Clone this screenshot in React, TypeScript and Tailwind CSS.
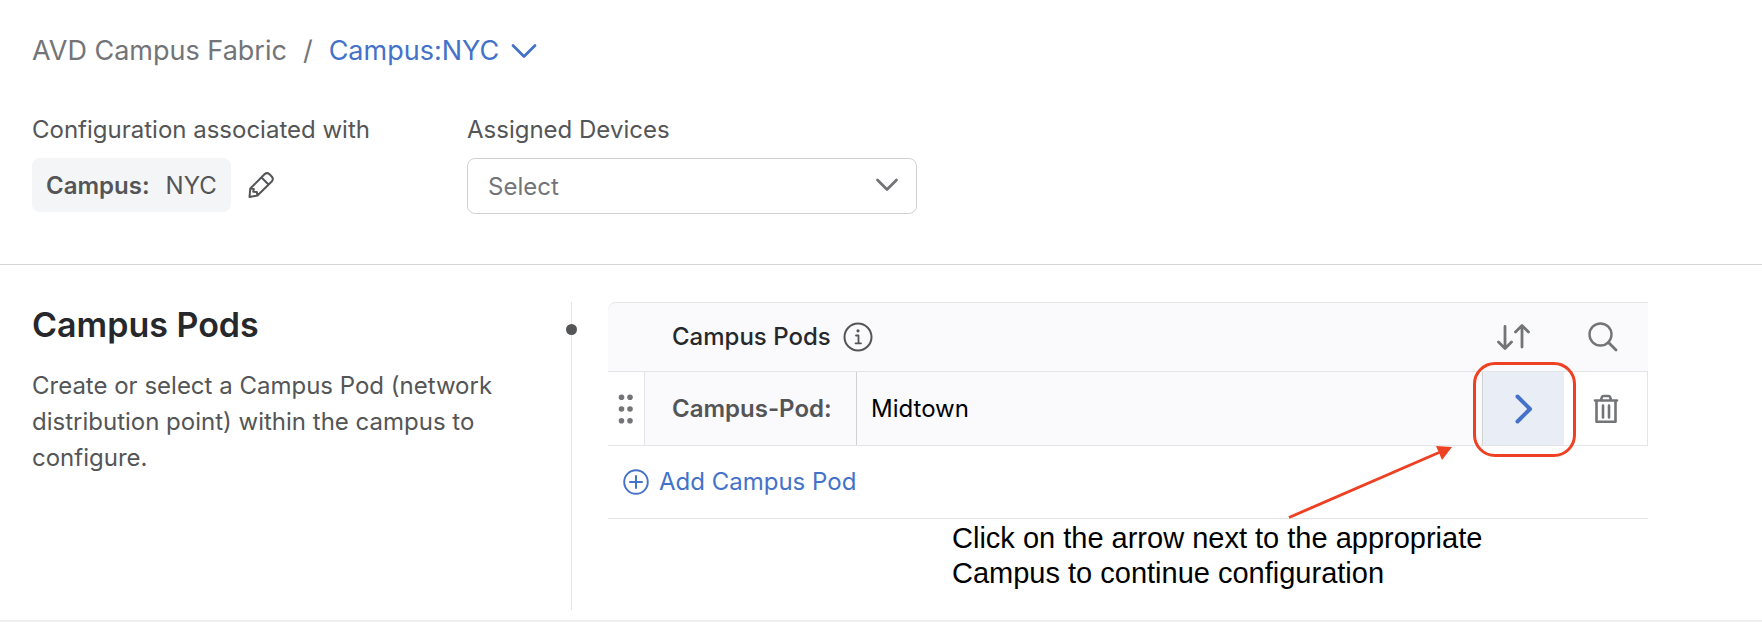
import type { ReactNode } from "react";

function Glyph({ className, box, children }: { className: string; box: string; children: ReactNode }) {
  return (
    <svg className={className} viewBox={box} fill="none" stroke="currentColor" strokeLinecap="round" strokeLinejoin="round" aria-hidden="true">
      {children}
    </svg>
  );
}

function Header() {
  return (
    <header className="border-b border-[#d5d5d7] px-8 pt-8 pb-[50px]">
      <nav aria-label="Breadcrumb" className="flex h-[38px] items-center text-[27px] leading-[38px]">
        <a href="#fabric" className="text-[#737478]">AVD Campus Fabric</a>
        <span className="mx-4 text-[#737478]">/</span>
        <button type="button" className="flex items-center gap-3 text-[#4472c9]">
          Campus:NYC
          <Glyph className="h-4 w-[26px]" box="0 0 26 16">
            <path d="M2 2.5 13 13.5 24 2.5" strokeWidth="2.8" />
          </Glyph>
        </button>
      </nav>
      <div className="mt-[45px] flex">
        <div className="w-[435px]">
          <p className="text-[24px] leading-[30px]">Configuration associated with</p>
          <div className="mt-[13px] flex items-center gap-4">
            <div className="flex h-[54px] items-center gap-4 rounded-lg bg-[#f4f5f7] px-3.5 pt-0.5 text-[24px]">
              <span className="font-semibold">Campus:</span>
              <span>NYC</span>
            </div>
            <button type="button" aria-label="Edit association">
              <Glyph className="h-7 w-7" box="0 0 28 28">
                <path d="M2.500 26 3.300 17.500 17.500 3.300Q20 1 22.500 3.300L24.700 5.500Q27 8 24.700 10.500L10.500 24.500ZM14.500 6.500 21.500 13.500M3.300 17.500 6.800 18 6.300 20.800 9.800 21 10.500 24.500" strokeWidth="2" />
              </Glyph>
            </button>
          </div>
        </div>
        <div className="w-[450px]">
          <label htmlFor="devices" className="block text-[24px] leading-[30px]">Assigned Devices</label>
          <div className="relative mt-[13px]">
            <select id="devices" className="h-14 w-full appearance-none rounded-lg border border-[#d0d1d3] bg-white px-5 pt-0.5 text-[24px] text-[#737478]">
              <option>Select</option>
            </select>
            <Glyph className="pointer-events-none absolute top-5 right-[18px] h-[14px] w-[24px] text-[#737478]" box="0 0 24 14">
              <path d="M2.500 2 12 11.500 21.500 2" strokeWidth="2.8" />
            </Glyph>
          </div>
        </div>
      </div>
    </header>
  );
}

function PodTable() {
  return (
    <div className="relative w-[1040px] shrink-0">
      <div className="flex h-[70px] items-center rounded-tl-lg border-y border-[#e4e5e7] bg-[#fafafc] pl-16">
        <span className="text-[24px] font-medium text-[#27282b]">Campus Pods</span>
        <button type="button" aria-label="About campus pods" className="ml-3 text-[#545557]">
          <Glyph className="h-[30px] w-[30px]" box="0 0 30 30">
            <circle cx="15" cy="15" r="13.500" strokeWidth="2" />
            <path d="M13 13.500h2.500V21M12.500 21.300h5.500" strokeWidth="1.800" />
            <circle cx="15" cy="8.800" r="1.600" fill="currentColor" stroke="none" />
          </Glyph>
        </button>
        <button type="button" aria-label="Sort" className="ml-auto text-[#737478]">
          <Glyph className="h-7 w-[34px]" box="0 0 34 28">
            <path d="M9 3.500v22M2.500 19 9 25.500l6.500-6.500M26 24V3M19.500 9 26 2.500 32.500 9" strokeWidth="2.800" />
          </Glyph>
        </button>
        <button type="button" aria-label="Search" className="mr-[30px] ml-[58px] text-[#737478]">
          <Glyph className="h-[30px] w-[30px]" box="0 0 30 30">
            <circle cx="12.500" cy="12.500" r="11" strokeWidth="2.400" />
            <path d="m20.500 20.500 7.500 7.500" strokeWidth="2.800" />
          </Glyph>
        </button>
      </div>
      <div className="flex h-[74px] border-r border-b border-[#e4e5e7]">
        <button type="button" aria-label="Reorder" className="flex w-9 items-center justify-center text-[#737478]">
          <svg className="h-[30px] w-4" viewBox="0 0 16 30" fill="currentColor" aria-hidden="true">
            <circle cx="3.500" cy="3.300" r="2.800" /><circle cx="12" cy="3.300" r="2.800" />
            <circle cx="3.500" cy="15" r="2.800" /><circle cx="12" cy="15" r="2.800" />
            <circle cx="3.500" cy="26.700" r="2.800" /><circle cx="12" cy="26.700" r="2.800" />
          </svg>
        </button>
        <label htmlFor="pod" className="flex w-[212px] items-center border-l border-[#e4e5e7] bg-[#fafafc] pl-[27px] text-[24px] font-semibold">Campus-Pod:</label>
        <input id="pod" defaultValue="Midtown" className="min-w-0 flex-1 border-l border-[#d0d1d3] bg-[#fafafc] px-3.5 text-[24px] text-black outline-none" />
        <button type="button" aria-label="Open Midtown" className="relative flex w-[82px] items-center justify-center border-l border-[#d0d1d3] bg-[#e8edf6] text-[#4472c9]">
          <Glyph className="h-[30px] w-[18px]" box="0 0 18 30">
            <path d="M2.500 2.500 15 15 2.500 27.500" strokeWidth="4" />
          </Glyph>
          <span className="pointer-events-none absolute -top-2.5 -right-3 -bottom-3 -left-2.5 rounded-[22px] border-3 border-[#ee4023]" />
        </button>
        <button type="button" aria-label="Delete Midtown" className="flex w-[83px] items-center justify-center text-[#737478]">
          <Glyph className="h-[30px] w-[26px]" box="0 0 26 30">
            <path d="M2 6.500h22M3.500 7V27.800h19V7M8 6 9 2.800Q9.300 2 10.500 2h5Q16.700 2 17 2.800L18 6M10 11.500v12M16 11.500v12" strokeWidth="2.600" />
          </Glyph>
        </button>
      </div>
      <div className="flex h-[73px] items-center border-b border-[#e4e5e7] pl-[15px]">
        <button type="button" className="flex items-center gap-2.5 text-[24px] text-[#4472c9]">
          <Glyph className="h-[26px] w-[26px]" box="0 0 26 26">
            <circle cx="13" cy="13" r="11.800" strokeWidth="1.900" />
            <path d="M13 7v12M7 13h12" strokeWidth="2" />
          </Glyph>
          Add Campus Pod
        </button>
      </div>
      <svg className="pointer-events-none absolute top-[142px] left-[676px] h-[76px] w-[176px]" viewBox="0 0 176 76" fill="#ee4023" aria-hidden="true">
        <path d="M5 73.500 155 8.500" stroke="#ee4023" strokeWidth="2.900" />
        <path d="m168 3-16-1 6 14Z" />
      </svg>
      <p className="ml-[344px] pt-0.5 font-['Liberation_Sans',Arial,sans-serif] text-[29px] leading-[35px] text-black">
        Click on the arrow next to the appropriate<br />Campus to continue configuration
      </p>
    </div>
  );
}

export default function App() {
  return (
    <div className="bg-white font-['Inter',sans-serif] text-[#545557]">
      <Header />
      <main className="flex border-b-2 border-[#eeeeef] pt-[37px] pb-[10px] pl-8">
        <section className="w-[539px] shrink-0 pr-14">
          <h1 className="text-[34px] leading-[46px] font-semibold text-[#27282b]">Campus Pods</h1>
          <p className="mt-5 text-[24px] leading-9">Create or select a Campus Pod (network distribution point) within the campus to configure.</p>
        </section>
        <div className="relative mr-9 h-[308px] w-px bg-[#e4e5e7]">
          <span className="absolute top-[22px] -left-[5px] h-[11px] w-[11px] rounded-full bg-[#545557]" />
        </div>
        <PodTable />
      </main>
    </div>
  );
}
